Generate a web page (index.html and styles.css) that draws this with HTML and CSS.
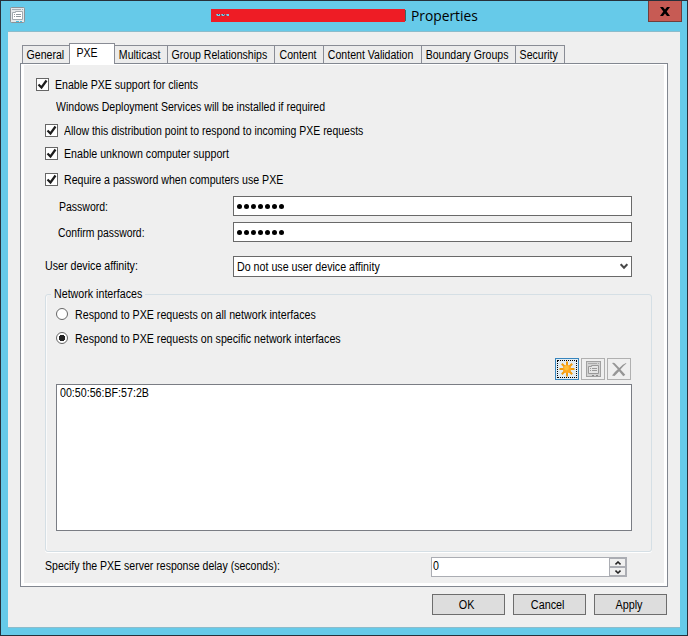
FILE: index.html
```html
<!DOCTYPE html>
<html lang="en">
<head>
<meta charset="utf-8">
<title>Properties</title>
<link rel="stylesheet" href="styles.css">
</head>
<body>
<div class="window">
  <header class="titlebar">
    <svg class="app-icon" width="15" height="17" viewBox="0 0 15 17"><rect x=".5" y=".5" width="14" height="15" rx="1" fill="#e4e8ea" stroke="#8b9297"/><path d="M2 2.5h9M12 2.5h1" stroke="#a5adb2"/><path d="M2.5 5.5h3v-1h7v8h-10z" fill="#fff" stroke="#a1a9ae"/><path d="M4 7.5h1M6 7.5h5M4 9.5h1M6 9.5h5" stroke="#8f989e"/><path d="M6 14.5h3M10 14.5h2" stroke="#49bce0"/></svg>
    <div class="title"><span class="redaction"><svg width="13" height="4" viewBox="0 0 13 4"><path d="M0 1h4v2h-3zM5 1h4l-1 2h-2zM10 1h3v2h-2z" fill="#78cce6"/><path d="M2 1.5h1M4 2.5h1M7 1.5h1M9 2.5h1" stroke="#355c70"/></svg></span><span class="remnant"></span><span class="title-text">Properties</span></div>
    <button class="close" aria-label="Close"><svg width="10" height="9" viewBox="0 0 10 9"><path d="M0 0h3l2 2.5L7 0h3L6.7 4.5 10 9H7L5 6.5 3 9H0l3.3-4.5z" fill="#000"/></svg></button>
  </header>
  <main class="client">
    <nav class="tabs">
      <div class="tab general"><span>General</span></div><div class="tab active"><span>PXE</span></div><div class="tab multicast"><span>Multicast</span></div><div class="tab relations"><span>Group Relationships</span></div><div class="tab content"><span>Content</span></div><div class="tab validation"><span>Content Validation</span></div><div class="tab boundary"><span>Boundary Groups</span></div><div class="tab security"><span>Security</span></div>
    </nav>
    <section class="panel"><div class="page">
      <label class="check first"><i class="box"><svg width="11" height="11" viewBox="0 0 11 11"><path d="M1.5 5.5l3 3 5-7" /></svg></i><span class="t-enable">Enable PXE support for clients</span></label>
      <p class="note"><span class="t-note">Windows Deployment Services will be installed if required</span></p>
      <label class="check allow"><i class="box"><svg width="11" height="11" viewBox="0 0 11 11"><path d="M1.5 5.5l3 3 5-7" /></svg></i><span class="t-allow">Allow this distribution point to respond to incoming PXE requests</span></label>
      <label class="check unknown"><i class="box"><svg width="11" height="11" viewBox="0 0 11 11"><path d="M1.5 5.5l3 3 5-7" /></svg></i><span class="t-unknown">Enable unknown computer support</span></label>
      <label class="check require"><i class="box"><svg width="11" height="11" viewBox="0 0 11 11"><path d="M1.5 5.5l3 3 5-7" /></svg></i><span class="t-require">Require a password when computers use PXE</span></label>
      <div class="field password"><span class="t-pass">Password:</span><div class="input"><i></i><i></i><i></i><i></i><i></i><i></i><i></i></div></div>
      <div class="field confirm"><span class="t-confirm">Confirm password:</span><div class="input"><i></i><i></i><i></i><i></i><i></i><i></i><i></i></div></div>
      <div class="field affinity"><span class="t-affinity">User device affinity:</span><div class="select"><span class="t-select">Do not use user device affinity</span><svg width="8" height="7" viewBox="0 0 8 7"><path d="M.7 1.2L4 4.7l3.3-3.5" fill="none" stroke="#484848" stroke-width="2"/></svg></div></div>
      <fieldset class="network">
        <legend><span class="t-network">Network interfaces</span></legend>
        <label class="radio"><i></i><span class="t-all">Respond to PXE requests on all network interfaces</span></label>
        <label class="radio selected"><i></i><span class="t-specific">Respond to PXE requests on specific network interfaces</span></label>
        <div class="toolbar">
          <button class="tool new" aria-label="New"><svg width="16" height="16" viewBox="0 0 16 16"><g stroke="#f19b0c" stroke-width="2"><path d="M8 .5v15M.5 8h15M2.8 2.8l10.4 10.4M13.2 2.8L2.8 13.2"/></g><circle cx="8" cy="8" r="4.1" fill="#ffa61c"/><circle cx="7.5" cy="7" r="2.4" fill="#ffc13c"/></svg></button>
          <button class="tool" aria-label="Properties"><svg width="15" height="16" viewBox="0 0 15 16"><rect x=".5" y=".5" width="14" height="15" fill="#d2d2d2" stroke="#a1a1a1"/><path d="M2 2.5h9M12 2.5h1" stroke="#aaa"/><path d="M2.5 5.5h3v-1h7v8h-10z" fill="#e5e5e5" stroke="#999"/><path d="M4 7.5h1M6 7.5h5M4 9.5h1M6 9.5h5" stroke="#999"/><path d="M6 14.5h2M10 14.5h2" stroke="#888"/></svg></button>
          <button class="tool" aria-label="Delete"><svg width="16" height="15" viewBox="0 0 16 15"><path d="M1 1q2-1 3.5 1l3.8 4Q12 2 15 1l.4.5Q12 4 9.5 7.5l4.8 5.2-2 1.5-4.2-5Q5 12.5 3.5 14L1 13.5Q4 9.5 6.8 7.2z" fill="#969696"/></svg></button>
        </div>
        <div class="list"><span class="t-mac">00:50:56:BF:57:2B</span></div>
      </fieldset>
      <div class="delay"><span class="t-delay">Specify the PXE server response delay (seconds):</span>
        <div class="spinner"><span class="value">0</span><div class="steps"><b><svg width="6" height="4" viewBox="0 0 6 4"><path d="M.5 3.4L3 1l2.5 2.4"/></svg></b><b><svg width="6" height="4" viewBox="0 0 6 4"><path d="M.5.6L3 3 5.5.6"/></svg></b></div></div>
      </div>
    </div></section>
    <footer class="actions"><button><span>OK</span></button><button><span>Cancel</span></button><button><span>Apply</span></button></footer>
  </main>
</div>
</body>
</html>
```
FILE: styles.css
```css
* { box-sizing: border-box; }
body { margin: 0; font: 12px/16px "Liberation Sans", Arial, sans-serif; color: #000; }
button { font: inherit; color: inherit; padding: 0; border-radius: 0; }
svg { display: block; }
.window { width: 688px; height: 636px; border: 1px solid #27303a; background: #66cae9; padding: 0 7px 7px; }
.titlebar { height: 30px; display: flex; align-items: flex-start; }
.app-icon { margin: 6px 0 0 2px; }
.title { display: flex; align-items: center; height: 29px; margin-left: 186px; }
.redaction { width: 194px; height: 13px; background: #ee1c25; padding: 4px 0 0 5px; }
.remnant { width: 1px; height: 11px; background: #376a63; }
.title-text { font: 15px/20px "Open Sans", sans-serif; margin: 0 0 2px 5px; transform: scaleX(.92); transform-origin: left; }
.close { margin: 0 -2px 0 auto; width: 34px; height: 21px; background: #c75b54; border: 1px solid #703d3b; border-top: 0; display: grid; place-items: center; }
.client { height: 597px; background: #efefef; border-top: 1px solid #8cbccb; border-bottom: 1px solid #8cbccb; padding: 11px 12px 0; }
.tabs { display: flex; align-items: flex-end; height: 20px; padding-left: 2px; position: relative; z-index: 1; }
.tab { height: 18px; border: 1px solid #898c95; border-bottom: 0; background: #ececec; display: flex; justify-content: center; align-items: center; white-space: nowrap; margin-right: -1px; padding: 1px 2px 0 0; }
.tab span { transform: scaleX(.88); }
.active { height: 21px; width: 46px; background: #fff; margin-bottom: -1px; padding: 0 9px 2px 0; }
.general { width: 48px; padding-right: 1px; }
.multicast { width: 54px; padding-right: 3px; }
.relations { width: 108px; padding-right: 3px; }
.content { width: 50px; }
.validation { width: 99px; padding-right: 3px; }
.boundary { width: 95px; }
.security { width: 50px; }
.panel { width: 648px; height: 524px; border: 1px solid #828790; background: #fff; padding: 1px 3px 3px; }
.page { height: 518px; background: #efefef; padding: 9px 13px 0 12px; }
.page span { display: inline-block; white-space: nowrap; transform: scaleX(var(--stretch, .889)); transform-origin: left; }
.page .t-enable, .page .t-note { --stretch: .879; }
.page .t-allow { --stretch: .873; }
.page .t-require { --stretch: .884; }
.page .t-pass { --stretch: .875; margin: 2px 0 0 1px; }
.page .t-confirm { --stretch: .865; margin-top: 2px; }
.page .t-delay { --stretch: .878; margin-bottom: 3px; }
.page .t-affinity { margin-bottom: 1px; }
.check { display: flex; align-items: center; gap: 6px; height: 23px; padding-left: 9px; }
.check.first { height: 22px; padding-left: 0; }
.first .box { margin-bottom: 1px; }
.box { width: 13px; height: 13px; border: 1px solid #666; background: #fff; flex: none; }
.box path { fill: none; stroke: #1c1c1c; stroke-width: 2.2; }
.note { height: 22px; line-height: 22px; margin: 0 0 1px; padding-left: 20px; }
.check.require { margin-top: 2px; height: 25px; }
.field { display: flex; align-items: center; justify-content: space-between; height: 20px; padding: 0 19px 0 22px; }
.password { margin-top: 4px; }
.confirm { margin-top: 6px; }
.affinity { margin-top: 14px; height: 21px; padding-left: 9px; }
.input, .select { width: 399px; height: 100%; border: 1px solid #696969; background: #fff; display: flex; align-items: center; padding: 0 4px 0 3px; }
.input { gap: 2px; }
.input i { width: 5px; height: 5px; border-radius: 50%; background: #000; }
.select { justify-content: space-between; padding-right: 3px; }
.network { display: block; width: 607px; height: 265px; margin: 10px 0 0 9px; padding: 2px 20px 0 10px; border: 1px solid #d5dfe5; border-radius: 3px; box-shadow: inset 1px 0 #fafafa, 0 1px #fff; min-width: 0; }
.network legend { width: 94px; padding: 0 3px; height: 14px; line-height: 14px; margin-left: -5px; }
.radio { display: flex; align-items: center; gap: 7px; height: 24px; }
.radio i { width: 12px; height: 12px; margin-bottom: 2px; border: 1px solid #666; border-radius: 50%; background: #fff; }
.selected i { background: radial-gradient(circle, #222 0 3px, #fff 3.5px); }
.toolbar { display: flex; justify-content: flex-end; gap: 2px; margin-top: 7px; }
.tool { width: 24px; height: 22px; background: #efefef; border: 1px solid #b0b0b0; display: grid; place-items: center; }
.tool.new { border-color: #3785bd; background: #e3edf3; outline: 1px dotted #000; outline-offset: -3px; }
.list { width: 576px; height: 147px; margin-top: 4px; background: #fff; border: 1px solid #7a7d84; padding-left: 3px; }
.delay { display: flex; align-items: center; justify-content: space-between; height: 20px; margin: 5px 24px 0 9px; }
.spinner { width: 196px; height: 20px; border: 1px solid #abadb3; background: #fff; display: flex; justify-content: space-between; align-items: center; padding-left: 1px; }
.spinner .value { margin-bottom: 2px; }
.steps { width: 17px; height: 18px; display: grid; gap: 0; }
.steps b { height: 9px; border: 1px solid #abadb3; background: #f0f0f0; display: grid; place-items: center; }
.steps path { fill: none; stroke: #222; stroke-width: 1.5; }
.actions { display: flex; justify-content: flex-end; gap: 8px; margin: 7px 1px 0 0; }
.actions button { width: 73px; height: 21px; background: #ddd; border: 1px solid #6d6d6d; padding-right: 3px; }
.actions span { display: inline-block; transform: scaleX(.9); }
```
